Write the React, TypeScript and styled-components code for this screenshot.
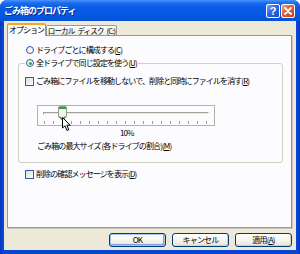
import styled, { createGlobalStyle } from 'styled-components';

const GlobalStyle = createGlobalStyle`
  html, body {
    margin: 0;
    padding: 0;
    background: #fff;
  }
  body {
    font-family: "Noto Sans CJK JP", "Noto Sans", sans-serif;
    color: #000;
  }
`;

const Window = styled.div`
  width: 300px;
  height: 254px;
  display: flex;
  flex-direction: column;
  background: linear-gradient(90deg, #0A2FB8 0px, #0847D6 2px, #0847D6 298px, #0A2FB8 300px);
  border-radius: 7px 7px 0 0;
  overflow: hidden;
`;

const TitleBar = styled.div`
  height: 21px;
  flex: none;
  display: flex;
  align-items: center;
  padding: 0 5px 0 4px;
  background: linear-gradient(#4A94FA 0%, #1A6CF0 14%, #0A5CE6 35%, #0657E2 70%, #0552DA 100%);
`;

const Title = styled.div`
  flex: 1;
  color: #fff;
  font-weight: bold;
  font-size: 9px;
  letter-spacing: -1px;
  line-height: 12px;
  text-shadow: 1px 1px 0 #0A2A8E;
`;

const TitleButton = styled.div<{ $kind: 'help' | 'close' }>`
  width: 14px;
  height: 14px;
  box-sizing: border-box;
  margin-left: 1px;
  border: 1px solid #fff;
  border-radius: 2px;
  display: flex;
  align-items: center;
  justify-content: center;
  color: #fff;
  font-family: "Liberation Sans", sans-serif;
  font-weight: bold;
  font-size: 11px;
  background: ${p =>
    p.$kind === 'close'
      ? 'linear-gradient(135deg, #F4A184 0%, #E35A30 45%, #C8421C 100%)'
      : 'linear-gradient(135deg, #7AA8FA 0%, #2E66E2 45%, #1B4FCB 100%)'};
`;

const Client = styled.div`
  flex: 1;
  margin: 0 4px 4px 4px;
  padding: 2px 4px 0 3px;
  background: #ECE9D8;
  display: flex;
  flex-direction: column;
`;

const TabStrip = styled.div`
  height: 12px;
  display: flex;
  align-items: flex-end;
  position: relative;
  z-index: 1;
`;

const Tab = styled.div<{ $active?: boolean }>`
  box-sizing: border-box;
  height: ${p => (p.$active ? 13 : 10)}px;
  margin-bottom: ${p => (p.$active ? -1 : 0)}px;
  padding: 0;
  display: flex;
  align-items: ${p => (p.$active ? 'flex-start' : 'center')};
  justify-content: center;
  font-size: ${p => (p.$active ? 8 : 7.5)}px;
  letter-spacing: ${p => (p.$active ? -1 : -0.8)}px;
  word-spacing: 2px;
  line-height: 10px;
  white-space: pre;
  border: 1px solid #919B9C;
  border-bottom: none;
  border-radius: 2px 2px 0 0;
  border-top: ${p => (p.$active ? '2px solid #F5A623' : '1px solid #919B9C')};
  background: ${p => (p.$active ? '#FCFCFE' : 'linear-gradient(#FFFFFF, #ECEBE6)')};
  width: ${p => (p.$active ? 39 : 71)}px;
`;

const Panel = styled.div`
  flex: 1;
  box-sizing: border-box;
  border: 1px solid #919B9C;
  background: #FCFCFE;
  box-shadow: 1px 1px 0 #C9C7BA;
  padding: 9px 0 0 10px;
  display: flex;
  flex-direction: column;
  align-items: flex-start;
`;

const OptionRow = styled.div<{ $indent?: number; $top?: number }>`
  display: flex;
  align-items: center;
  height: 10px;
  margin-left: ${p => p.$indent ?? 0}px;
  margin-top: ${p => p.$top ?? 0}px;
  gap: 2px;
`;

const Label = styled.span`
  font-size: 8px;
  letter-spacing: -0.9px;
  line-height: 10px;
  white-space: nowrap;
`;

const Key = styled.u`
  text-decoration: underline;
  text-underline-offset: 1px;
`;

const Radio = styled.span<{ $checked?: boolean }>`
  width: 8px;
  height: 8px;
  box-sizing: border-box;
  border: 1px solid #2B5FA8;
  border-radius: 50%;
  background: radial-gradient(circle at 65% 65%, #FFFFFF 0%, #E4E3DA 100%);
  display: flex;
  align-items: center;
  justify-content: center;
  flex: none;

  &::after {
    content: '';
    display: ${p => (p.$checked ? 'block' : 'none')};
    width: 3px;
    height: 3px;
    border-radius: 50%;
    background: #2BAA2B;
  }
`;

const Check = styled.span`
  width: 9px;
  height: 9px;
  box-sizing: border-box;
  border: 1px solid #2B5FA8;
  background: linear-gradient(135deg, #DCDCD6 0%, #FFFFFF 100%);
  flex: none;
`;

const Group = styled.fieldset`
  margin: 3px 0 0 0;
  width: 265px;
  box-sizing: border-box;
  border: 1px solid #D0D0BF;
  border-radius: 3px;
  padding: 0 0 11px 6px;
  display: flex;
  flex-direction: column;
  align-items: flex-start;
  min-inline-size: 0;
`;

const Legend = styled.legend`
  padding: 0 1px;
  height: 10px;
`;

const SliderFrame = styled.div`
  position: relative;
  margin: 19px 0 0 12px;
  width: 178px;
  height: 21px;
  box-sizing: border-box;
  border: 1px solid #B2B2AA;
  padding: 6px 0 0 5px;
  display: flex;
  flex-direction: column;
  align-items: flex-start;
`;

const Track = styled.div`
  width: 166px;
  height: 3px;
  box-sizing: border-box;
  border-top: 1px solid #A5A397;
  border-left: 1px solid #A5A397;
  border-bottom: 1px solid #FFFFFF;
  border-right: 1px solid #FFFFFF;
  background: #E6E5DC;
`;

const TickRow = styled.div`
  margin: 6px 0 0 1px;
  width: 163px;
  height: 3px;
  display: flex;
  justify-content: space-between;
`;

const Tick = styled.span`
  width: 1px;
  height: 3px;
  background: #9D9C93;
`;

const Thumb = styled.svg`
  position: absolute;
  left: 20px;
  top: 0px;
`;

const Cursor = styled.svg`
  position: absolute;
  left: 24px;
  top: 11px;
`;

const Percent = styled(Label)`
  margin: 2px 0 0 95px;
`;

const SizeLabel = styled(Label)`
  margin: 3px 0 0 12px;
`;

const ButtonRow = styled.div`
  height: 14px;
  margin: 5px 0 3px;
  display: flex;
  justify-content: flex-end;
  gap: 6px;
`;

const Button = styled.div<{ $default?: boolean }>`
  width: 57px;
  height: 14px;
  box-sizing: border-box;
  border: 1px solid #003C74;
  border-radius: 3px;
  background: linear-gradient(#FFFFFF 0%, #F5F4EF 55%, #E5E2D5 100%);
  box-shadow: ${p =>
    p.$default
      ? 'inset 0 0 0 1px #A9C4F5, inset -1px -1px 0 1px #7C9CE8'
      : 'inset -1px -1px 0 #D6D0C5'};
  display: flex;
  align-items: center;
  justify-content: center;
  font-size: 8px;
  letter-spacing: -0.8px;
  line-height: 10px;
`;

const ticks = Array.from({ length: 19 }, (_, i) => i);

export default function App() {
  return (
    <>
      <GlobalStyle />
      <Window>
        <TitleBar>
          <Title>ごみ箱のプロパティ</Title>
          <TitleButton $kind="help">?</TitleButton>
          <TitleButton $kind="close">
            <svg width="8" height="8" viewBox="0 0 8 8">
              <path d="M1 1 L7 7 M7 1 L1 7" stroke="#fff" strokeWidth="1.8" strokeLinecap="round" />
            </svg>
          </TitleButton>
        </TitleBar>
        <Client>
          <TabStrip>
            <Tab $active>オプション</Tab>
            <Tab>ローカル ディスク (C:)</Tab>
          </TabStrip>
          <Panel>
            <OptionRow $indent={8}>
              <Radio />
              <Label>
                ドライブごとに構成する(<Key>C</Key>)
              </Label>
            </OptionRow>
            <Group>
              <Legend>
                <OptionRow>
                  <Radio $checked />
                  <Label>
                    全ドライブで同じ設定を使う(<Key>U</Key>)
                  </Label>
                </OptionRow>
              </Legend>
              <OptionRow $top={8}>
                <Check />
                <Label>
                  ごみ箱にファイルを移動しないで、削除と同時にファイルを消す(<Key>R</Key>)
                </Label>
              </OptionRow>
              <SliderFrame>
                <Track />
                <TickRow>
                  {ticks.map(t => (
                    <Tick key={t} />
                  ))}
                </TickRow>
                <Thumb width="9" height="15" viewBox="0 0 9 15">
                  <path
                    d="M0.5 1.5 Q0.5 0.5 1.5 0.5 H7.5 Q8.5 0.5 8.5 1.5 V10.5 L4.5 14.5 L0.5 10.5 Z"
                    fill="#F4F3EC"
                    stroke="#8E9A8E"
                  />
                  <rect x="1" y="1" width="7" height="2" fill="#22A83A" />
                  <path d="M1.5 10.5 L4.5 13.5 L7.5 10.5" fill="none" stroke="#22A83A" strokeWidth="1.2" />
                </Thumb>
                <Cursor width="10" height="15" viewBox="0 0 10 15">
                  <path
                    d="M0.5 0.5 L0.5 11 L3 8.8 L5 13.5 L6.8 12.7 L4.9 8.2 L8.3 8.2 Z"
                    fill="#fff"
                    stroke="#000"
                    strokeWidth="1"
                    strokeLinejoin="round"
                  />
                </Cursor>
              </SliderFrame>
              <Percent>10%</Percent>
              <SizeLabel>
                ごみ箱の最大サイズ (各ドライブの割合)(<Key>M</Key>)
              </SizeLabel>
            </Group>
            <OptionRow $indent={7} $top={6}>
              <Check />
              <Label>
                削除の確認メッセージを表示(<Key>D</Key>)
              </Label>
            </OptionRow>
          </Panel>
          <ButtonRow>
            <Button $default>OK</Button>
            <Button>キャンセル</Button>
            <Button>
              適用(<Key>A</Key>)
            </Button>
          </ButtonRow>
        </Client>
      </Window>
    </>
  );
}
